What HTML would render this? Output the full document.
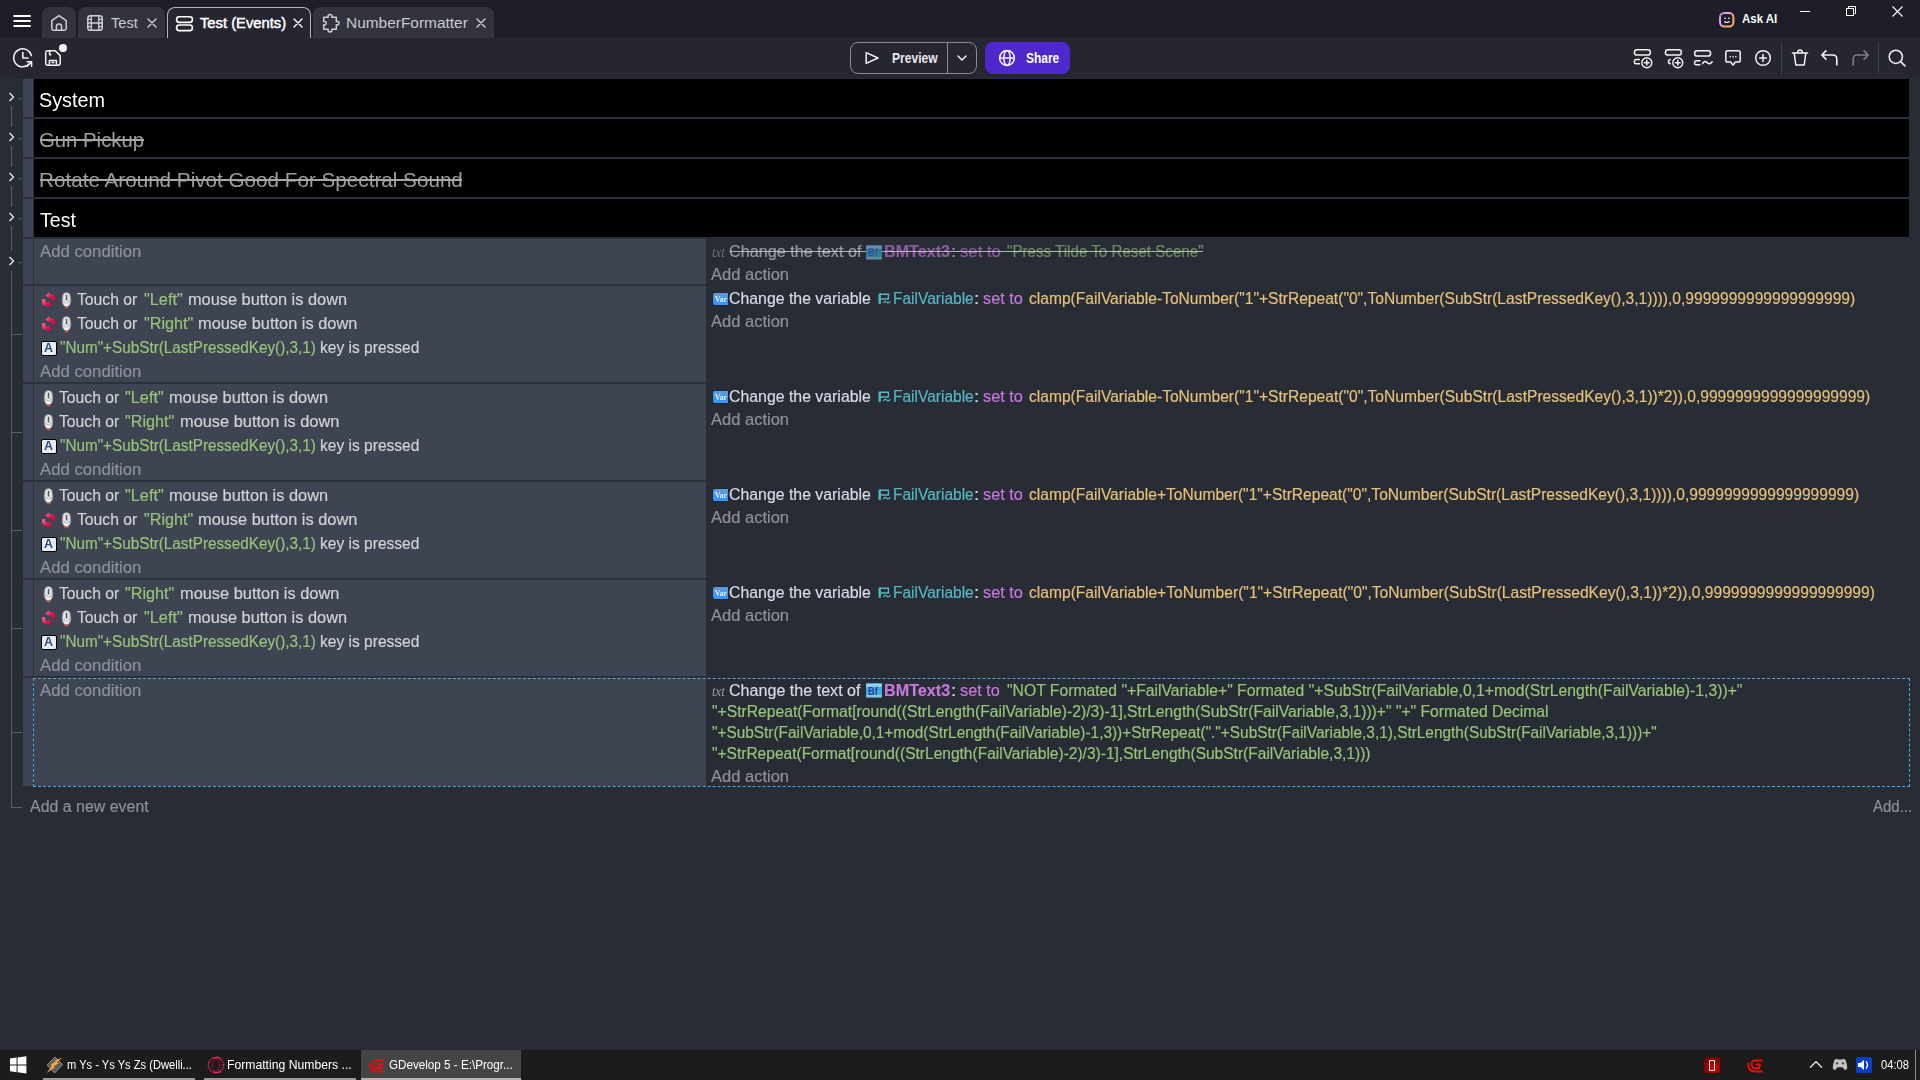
<!DOCTYPE html>
<html><head><meta charset="utf-8"><title>GDevelop 5</title>
<style>
html,body{margin:0;padding:0;width:1920px;height:1080px;overflow:hidden;background:#282c34;}
body{position:relative;font-family:"Liberation Sans",sans-serif;}
body>div,body>svg,.t,.gl>div{position:absolute;}
.gl{left:0;top:0;width:1920px;height:1080px;will-change:transform;}
.t{white-space:pre;transform-origin:0 0;display:inline-block;}
svg{overflow:visible;}
</style></head><body>
<div style="left:0px;top:0px;width:1920px;height:38px;background:#1d1e27;"></div>
<div style="left:0px;top:38px;width:1920px;height:40px;background:#25262f;"></div>
<div style="left:42px;top:7px;width:34px;height:31px;background:#32333d;border-radius:8px 8px 0 0;"></div>
<div style="left:78px;top:7px;width:87px;height:31px;background:#32333d;border-radius:8px 8px 0 0;"></div>
<div style="left:167px;top:7px;width:142px;height:30px;background:#25262f;border:1px solid #b4b5bd;border-bottom:none;border-radius:8px 8px 0 0;"></div>
<div style="left:313px;top:7px;width:181px;height:31px;background:#32333d;border-radius:8px 8px 0 0;"></div>
<div style="left:850px;top:42px;width:125px;height:30px;border:1px solid #8a8b95;border-radius:8px;"></div>
<div style="left:947px;top:43px;width:1px;height:30px;background:#8a8b95;"></div>
<div style="left:985px;top:42px;width:85px;height:32px;background:#4c28cd;border-radius:8px;"></div>
<div style="left:1781px;top:42px;width:1px;height:32px;background:#3b4152;"></div>
<div style="left:1878px;top:42px;width:1px;height:32px;background:#3b4152;"></div>
<div style="left:23px;top:79px;width:1886px;height:159px;background:#2c313b;"></div>
<div style="left:23px;top:79px;width:10px;height:38px;background:#3e4452;"></div>
<div style="left:34px;top:79px;width:1875px;height:38px;background:#000000;"></div>
<div style="left:23px;top:119px;width:10px;height:38px;background:#3e4452;"></div>
<div style="left:34px;top:119px;width:1875px;height:38px;background:#000000;"></div>
<div style="left:23px;top:159px;width:10px;height:38px;background:#3e4452;"></div>
<div style="left:34px;top:159px;width:1875px;height:38px;background:#000000;"></div>
<div style="left:23px;top:199px;width:10px;height:38px;background:#3e4452;"></div>
<div style="left:34px;top:199px;width:1875px;height:38px;background:#000000;"></div>
<div style="left:23px;top:237px;width:683px;height:549px;background:#2c313b;"></div>
<div style="left:23px;top:239px;width:10px;height:45px;background:#3e4452;"></div>
<div style="left:34px;top:239px;width:672px;height:45px;background:#3e4452;"></div>
<div style="left:706px;top:239px;width:1203px;height:45px;background:#282c34;"></div>
<div style="left:23px;top:286px;width:10px;height:96px;background:#3e4452;"></div>
<div style="left:34px;top:286px;width:672px;height:96px;background:#3e4452;"></div>
<div style="left:706px;top:286px;width:1203px;height:96px;background:#282c34;"></div>
<div style="left:23px;top:384px;width:10px;height:96px;background:#3e4452;"></div>
<div style="left:34px;top:384px;width:672px;height:96px;background:#3e4452;"></div>
<div style="left:706px;top:384px;width:1203px;height:96px;background:#282c34;"></div>
<div style="left:23px;top:482px;width:10px;height:96px;background:#3e4452;"></div>
<div style="left:34px;top:482px;width:672px;height:96px;background:#3e4452;"></div>
<div style="left:706px;top:482px;width:1203px;height:96px;background:#282c34;"></div>
<div style="left:23px;top:580px;width:10px;height:96px;background:#3e4452;"></div>
<div style="left:34px;top:580px;width:672px;height:96px;background:#3e4452;"></div>
<div style="left:706px;top:580px;width:1203px;height:96px;background:#282c34;"></div>
<div style="left:23px;top:678px;width:10px;height:108px;background:#3e4452;"></div>
<div style="left:34px;top:678px;width:672px;height:108px;background:#3e4452;"></div>
<div style="left:706px;top:678px;width:1203px;height:108px;background:#282c34;"></div>
<div style="left:33px;top:678px;width:1875px;height:107px;border:1px dashed #3daee9;"></div>
<svg style="left:8px;top:92px" width="8" height="10"><path d="M1.5 1 L5.5 5 L1.5 9" fill="none" stroke="#e6e6e6" stroke-width="1.4"/></svg>
<div style="left:19px;top:98px;width:3px;height:1px;background:#5b5f6a;"></div>
<svg style="left:8px;top:132px" width="8" height="10"><path d="M1.5 1 L5.5 5 L1.5 9" fill="none" stroke="#e6e6e6" stroke-width="1.4"/></svg>
<div style="left:19px;top:138px;width:3px;height:1px;background:#5b5f6a;"></div>
<svg style="left:8px;top:172px" width="8" height="10"><path d="M1.5 1 L5.5 5 L1.5 9" fill="none" stroke="#e6e6e6" stroke-width="1.4"/></svg>
<div style="left:19px;top:178px;width:3px;height:1px;background:#5b5f6a;"></div>
<svg style="left:8px;top:212px" width="8" height="10"><path d="M1.5 1 L5.5 5 L1.5 9" fill="none" stroke="#e6e6e6" stroke-width="1.4"/></svg>
<div style="left:19px;top:218px;width:3px;height:1px;background:#5b5f6a;"></div>
<svg style="left:8px;top:256px" width="8" height="10"><path d="M1.5 1 L5.5 5 L1.5 9" fill="none" stroke="#e6e6e6" stroke-width="1.4"/></svg>
<div style="left:19px;top:262px;width:3px;height:1px;background:#5b5f6a;"></div>
<div style="left:11px;top:106px;width:1px;height:21px;background:#5b5f6a;"></div>
<div style="left:11px;top:146px;width:1px;height:21px;background:#5b5f6a;"></div>
<div style="left:11px;top:186px;width:1px;height:21px;background:#5b5f6a;"></div>
<div style="left:11px;top:226px;width:1px;height:25px;background:#5b5f6a;"></div>
<div style="left:11px;top:271px;width:1px;height:537px;background:#5b5f6a;"></div>
<div style="left:11px;top:334px;width:11px;height:1px;background:#5b5f6a;"></div>
<div style="left:11px;top:432px;width:11px;height:1px;background:#5b5f6a;"></div>
<div style="left:11px;top:530px;width:11px;height:1px;background:#5b5f6a;"></div>
<div style="left:11px;top:628px;width:11px;height:1px;background:#5b5f6a;"></div>
<div style="left:11px;top:732px;width:11px;height:1px;background:#5b5f6a;"></div>
<div style="left:11px;top:807px;width:11px;height:1px;background:#5b5f6a;"></div>
<div style="left:0px;top:1050px;width:1920px;height:30px;background:#1c1c1c;"></div>
<div style="left:361px;top:1050px;width:160px;height:30px;background:#454545;"></div>
<div style="left:43px;top:1078px;width:152px;height:2px;background:#9b9b9b;"></div>
<div style="left:204px;top:1078px;width:152px;height:2px;background:#9b9b9b;"></div>
<div style="left:361px;top:1078px;width:160px;height:2px;background:#b5b5b5;"></div>
<div style="left:1915px;top:1050px;width:1px;height:30px;background:#8a8a8a;"></div>
<svg style="left:13px;top:14px;" width="19" height="14" viewBox="0 0 19 14"><path d="M1.2 2 H17 M1.2 7 H17 M1.2 12 H17" stroke="#ffffff" stroke-width="1.8" stroke-linecap="round"/></svg>
<svg style="left:50px;top:14px;" width="18" height="18" viewBox="0 0 18 18"><path d="M9 1.6 L1.8 6.6 V14.6 Q1.8 16.3 3.5 16.3 H14.5 Q16.2 16.3 16.2 14.6 V6.6 Z" fill="none" stroke="#cfcfd6" stroke-width="1.5" stroke-linejoin="round"/><path d="M6.4 16.3 V12.6 A2.6 2.6 0 0 1 11.6 12.6 V16.3" fill="none" stroke="#cfcfd6" stroke-width="1.5"/></svg>
<svg style="left:86px;top:14px;" width="18" height="18" viewBox="0 0 18 18"><rect x="1.8" y="1.7" width="14.4" height="14.6" rx="2.6" fill="none" stroke="#cfcfd6" stroke-width="1.5"/><path d="M5.3 1.7 V16.3 M12.7 1.7 V16.3 M5.3 9 H12.7 M1.8 5.4 H5.3 M1.8 9 H5.3 M1.8 12.6 H5.3 M12.7 5.4 H16.2 M12.7 9 H16.2 M12.7 12.6 H16.2" stroke="#cfcfd6" stroke-width="1.3" fill="none"/></svg>
<svg style="left:175px;top:15px;" width="19" height="17" viewBox="0 0 19 17"><rect x="1.6" y="1.8" width="15.8" height="5.6" rx="2.6" fill="none" stroke="#ffffff" stroke-width="1.6"/><rect x="1.6" y="10" width="15.8" height="5.6" rx="2.6" fill="none" stroke="#ffffff" stroke-width="1.6"/></svg>
<svg style="left:322px;top:13px;" width="18" height="20" viewBox="0 0 18 20"><path d="M1.7 4.2 H6.2 Q5.6 1.5 8 1.5 Q10.4 1.5 9.8 4.2 H14.3 V8.6 Q17 8 17 10.2 Q17 12.4 14.3 11.8 V16.2 H9.8 Q10.4 18.9 8 18.9 Q5.6 18.9 6.2 16.2 H1.7 V11.8 Q4.2 12.4 4.2 10.2 Q4.2 8 1.7 8.6 Z" fill="none" stroke="#cfcfd6" stroke-width="1.5" stroke-linejoin="round"/></svg>
<svg style="left:146.5px;top:18px;" width="10" height="10" viewBox="0 0 10 10"><path d="M1 1 L9 9 M9 1 L1 9" stroke="#cfcfd6" stroke-width="1.4" stroke-linecap="round"/></svg>
<svg style="left:292.5px;top:18px;" width="10" height="10" viewBox="0 0 10 10"><path d="M1 1 L9 9 M9 1 L1 9" stroke="#ffffff" stroke-width="1.4" stroke-linecap="round"/></svg>
<svg style="left:475.5px;top:18px;" width="10" height="10" viewBox="0 0 10 10"><path d="M1 1 L9 9 M9 1 L1 9" stroke="#cfcfd6" stroke-width="1.4" stroke-linecap="round"/></svg>
<svg style="left:12px;top:47px;" width="22" height="22" viewBox="0 0 22 22"><path d="M19.4 8.6 A9 9 0 1 0 17.6 16.6" fill="none" stroke="#f2f2f4" stroke-width="1.5" stroke-linecap="round"/><path d="M15.2 14.8 H19.6 V19.2 M19.4 15 L15.4 19" fill="none" stroke="#f2f2f4" stroke-width="1.5" stroke-linecap="round" stroke-linejoin="round"/><path d="M10.8 5.6 V11 H16" fill="none" stroke="#f2f2f4" stroke-width="1.6" stroke-linecap="round" stroke-linejoin="round"/></svg>
<svg style="left:44px;top:49px;" width="18" height="18" viewBox="0 0 18 18"><path d="M3.6 1.8 H11.2 L16.2 6.6 V14 Q16.2 16.2 14 16.2 H3.6 Q1.7 16.2 1.7 14 V4 Q1.7 1.8 3.6 1.8 Z" fill="none" stroke="#f2f2f4" stroke-width="1.5" stroke-linejoin="round"/><path d="M5.6 1.8 V5.8 H7.4 M5.4 16.2 V11.4 H12.4 V16.2 M7.4 13.6 H10.4" fill="none" stroke="#f2f2f4" stroke-width="1.5" stroke-linejoin="round"/></svg>
<div style="left:58.8px;top:43.6px;width:8.4px;height:8.4px;border-radius:50%;background:#fafafa;"></div>
<svg style="left:864px;top:50px;" width="16" height="16" viewBox="0 0 16 16"><path d="M2.2 2.6 L14 8 L2.2 13.4 Z" fill="none" stroke="#f2f2f4" stroke-width="1.5" stroke-linejoin="round"/></svg>
<svg style="left:956px;top:54px;" width="12" height="8" viewBox="0 0 12 8"><path d="M2 2 L6 6 L10 2" fill="none" stroke="#f2f2f4" stroke-width="1.5" stroke-linecap="round" stroke-linejoin="round"/></svg>
<svg style="left:998px;top:49px;" width="18" height="18" viewBox="0 0 18 18"><circle cx="9" cy="9" r="7.4" fill="none" stroke="#ffffff" stroke-width="1.5"/><ellipse cx="9" cy="9" rx="3.2" ry="7.4" fill="none" stroke="#ffffff" stroke-width="1.4"/><path d="M1.6 9 H16.4" stroke="#ffffff" stroke-width="1.4"/></svg>
<svg style="left:1718px;top:11px;" width="18" height="18" viewBox="0 0 18 18"><defs><linearGradient id="aig" x1="0" y1="0.1" x2="1" y2="0.9"><stop offset="0" stop-color="#b98bd6"/><stop offset="0.35" stop-color="#f0a8e8"/><stop offset="0.7" stop-color="#ffa070"/><stop offset="1" stop-color="#ffbb48"/></linearGradient></defs><rect x="2" y="2" width="13.4" height="13.4" rx="4.2" fill="#1d1e27" stroke="url(#aig)" stroke-width="2"/><path d="M6.4 7.4 H7.8 M10 7.4 H11.4" stroke="#ffffff" stroke-width="1.2"/><path d="M6.2 10.6 Q8.8 12.4 11.6 10.6" fill="none" stroke="#ffffff" stroke-width="1.2"/></svg>
<div style="left:1800px;top:11px;width:10px;height:1px;background:#ffffff;"></div>
<svg style="left:1845px;top:5px;" width="12" height="11" viewBox="0 0 12 11"><rect x="1.5" y="3.5" width="7" height="7" fill="none" stroke="#ffffff" stroke-width="1"/><path d="M3.5 3.5 V1.5 H10.5 V8.5 H8.5" fill="none" stroke="#ffffff" stroke-width="1"/></svg>
<svg style="left:1892px;top:6px;" width="11" height="11" viewBox="0 0 11 11"><path d="M0.5 0.5 L10.5 10.5 M10.5 0.5 L0.5 10.5" stroke="#ffffff" stroke-width="1.1"/></svg>
<svg style="left:1632px;top:47px;" width="24" height="24" viewBox="0 0 24 24"><rect x="2.4" y="2.8" width="16" height="5.2" rx="2.6" fill="none" stroke="#f2f2f4" stroke-width="1.5"/><path d="M8 12.4 H4.2 Q2.4 12.4 2.4 14 V15.2 Q2.4 16.8 4.2 16.8 H8" fill="none" stroke="#f2f2f4" stroke-width="1.5"/><circle cx="14.8" cy="15.7" r="5" fill="#25262f" stroke="#f2f2f4" stroke-width="1.4"/><path d="M12.4 15.7 H17.2 M14.8 13.299999999999999 V18.099999999999998" stroke="#f2f2f4" stroke-width="1.4" stroke-linecap="round"/></svg>
<svg style="left:1663px;top:47px;" width="24" height="24" viewBox="0 0 24 24"><rect x="2.4" y="2.8" width="16" height="5.2" rx="2.6" fill="none" stroke="#f2f2f4" stroke-width="1.5"/><path d="M7.8 12.4 Q5.4 12.4 5.4 14.6 Q5.4 16.8 7.8 16.8" fill="none" stroke="#f2f2f4" stroke-width="1.5"/><circle cx="14.8" cy="15.7" r="5" fill="#25262f" stroke="#f2f2f4" stroke-width="1.4"/><path d="M12.4 15.7 H17.2 M14.8 13.299999999999999 V18.099999999999998" stroke="#f2f2f4" stroke-width="1.4" stroke-linecap="round"/></svg>
<svg style="left:1692px;top:48px;" width="24" height="22" viewBox="0 0 24 22"><rect x="2.6" y="2.8" width="16" height="5.2" rx="2.6" fill="none" stroke="#f2f2f4" stroke-width="1.5"/><path d="M8.4 12.8 H4.4 Q2.6 12.8 2.6 14.4 V15.2 Q2.6 16.8 4.4 16.8 H8.4" fill="none" stroke="#f2f2f4" stroke-width="1.5"/><path d="M10.6 15.6 Q12.6 12 15.2 14.6 Q17.8 17.2 20.2 13.8" fill="none" stroke="#f2f2f4" stroke-width="1.5" stroke-linecap="round"/></svg>
<svg style="left:1724px;top:49px;" width="18" height="18" viewBox="0 0 18 18"><path d="M3.6 1.8 H14.4 Q16.2 1.8 16.2 3.6 V11.2 Q16.2 13 14.4 13 H11.4 L9 16 L6.6 13 H3.6 Q1.8 13 1.8 11.2 V3.6 Q1.8 1.8 3.6 1.8 Z" fill="none" stroke="#f2f2f4" stroke-width="1.5" stroke-linejoin="round"/><path d="M5.6 7.8 H6.8 M8.4 7.8 H9.6 M11.2 7.8 H12.4" stroke="#f2f2f4" stroke-width="1.4"/></svg>
<svg style="left:1754px;top:49px;" width="18" height="18" viewBox="0 0 18 18"><circle cx="9" cy="9" r="7.3" fill="none" stroke="#f2f2f4" stroke-width="1.5"/><path d="M5.6 9 H12.4 M9 5.6 V12.4" stroke="#f2f2f4" stroke-width="1.5" stroke-linecap="round"/></svg>
<svg style="left:1791px;top:48px;" width="18" height="19" viewBox="0 0 18 19"><path d="M1.4 5 H16.6 M3.2 5 L4.8 17 H13.2 L14.8 5 M6.6 4.8 Q6.6 2 9 2 Q11.4 2 11.4 4.8" fill="none" stroke="#f2f2f4" stroke-width="1.5" stroke-linecap="round" stroke-linejoin="round"/></svg>
<svg style="left:1820px;top:48px;" width="20" height="19" viewBox="0 0 20 19"><path d="M6.4 2.4 L1.8 7 L6.4 11.6 M2 7 H12.6 Q16.8 7 16.8 11 V17.6" fill="none" stroke="#f2f2f4" stroke-width="1.6" stroke-linejoin="round"/></svg>
<svg style="left:1850px;top:48px;" width="20" height="19" viewBox="0 0 20 19"><path d="M13.6 2.4 L18.2 7 L13.6 11.6 M18 7 H7.4 Q3.2 7 3.2 11 V17.6" fill="none" stroke="#7d7d85" stroke-width="1.6" stroke-linejoin="round"/></svg>
<svg style="left:1887px;top:48px;" width="20" height="20" viewBox="0 0 20 20"><circle cx="8.8" cy="8.8" r="6.6" fill="none" stroke="#f2f2f4" stroke-width="1.5"/><path d="M13.6 13.6 L18 17.8" stroke="#f2f2f4" stroke-width="1.6" stroke-linecap="round"/></svg>
<svg style="left:41.8px;top:292.0px;" width="14" height="16" viewBox="0 0 14 16"><defs><linearGradient id="ig" x1="0" y1="0" x2="1" y2="1"><stop offset="0" stop-color="#f27aa2"/><stop offset="0.55" stop-color="#e3124a"/><stop offset="1" stop-color="#d4003a"/></linearGradient></defs><path d="M3.2 3.5 L7.2 0.2 L7.3 2 C11.5 1.6 13.6 4 13.5 6.8 L12.9 9 L10.3 9 C10.6 6.5 9.6 5.2 7.4 5.2 L7.5 6.8 Z" fill="url(#ig)"/><path d="M10.3 12.5 L6.3 15.8 L6.2 14 C2 14.4 -0.1 12 0 9.2 L0.6 7 L3.2 7 C2.9 9.5 3.9 10.8 6.1 10.8 L6 9.2 Z" fill="url(#ig)"/></svg>
<svg style="left:61.4px;top:291.7px;" width="11" height="17" viewBox="0 0 11 17"><defs><linearGradient id="mg" x1="0" y1="0" x2="1" y2="0"><stop offset="0" stop-color="#c9c9c9"/><stop offset="0.5" stop-color="#ffffff"/><stop offset="1" stop-color="#bdbdbd"/></linearGradient></defs><ellipse cx="5.5" cy="14.6" rx="2.4" ry="1.9" fill="#e2473a"/><path d="M1.4 4.4 Q1.6 0.6 5.5 0.6 Q9.4 0.6 9.6 4.4 L10 8 Q10 14.6 5.5 14.6 Q1 14.6 1 8 Z" fill="url(#mg)" stroke="#6c6f78" stroke-width="0.6"/><path d="M5.5 2.6 V8.6" stroke="#55585f" stroke-width="1.6"/><path d="M2.8 9 Q5.5 13 8.2 9" fill="none" stroke="#9aa0a8" stroke-width="0.9"/></svg>
<svg style="left:41.8px;top:316.0px;" width="14" height="16" viewBox="0 0 14 16"><defs><linearGradient id="ig" x1="0" y1="0" x2="1" y2="1"><stop offset="0" stop-color="#f27aa2"/><stop offset="0.55" stop-color="#e3124a"/><stop offset="1" stop-color="#d4003a"/></linearGradient></defs><path d="M3.2 3.5 L7.2 0.2 L7.3 2 C11.5 1.6 13.6 4 13.5 6.8 L12.9 9 L10.3 9 C10.6 6.5 9.6 5.2 7.4 5.2 L7.5 6.8 Z" fill="url(#ig)"/><path d="M10.3 12.5 L6.3 15.8 L6.2 14 C2 14.4 -0.1 12 0 9.2 L0.6 7 L3.2 7 C2.9 9.5 3.9 10.8 6.1 10.8 L6 9.2 Z" fill="url(#ig)"/></svg>
<svg style="left:61.4px;top:315.7px;" width="11" height="17" viewBox="0 0 11 17"><defs><linearGradient id="mg" x1="0" y1="0" x2="1" y2="0"><stop offset="0" stop-color="#c9c9c9"/><stop offset="0.5" stop-color="#ffffff"/><stop offset="1" stop-color="#bdbdbd"/></linearGradient></defs><ellipse cx="5.5" cy="14.6" rx="2.4" ry="1.9" fill="#e2473a"/><path d="M1.4 4.4 Q1.6 0.6 5.5 0.6 Q9.4 0.6 9.6 4.4 L10 8 Q10 14.6 5.5 14.6 Q1 14.6 1 8 Z" fill="url(#mg)" stroke="#6c6f78" stroke-width="0.6"/><path d="M5.5 2.6 V8.6" stroke="#55585f" stroke-width="1.6"/><path d="M2.8 9 Q5.5 13 8.2 9" fill="none" stroke="#9aa0a8" stroke-width="0.9"/></svg>
<div style="left:41px;top:340.5px;width:14px;height:13px;background:#e8eaee;border:1px solid #000;border-radius:2px;"></div>
<div style="left:712.5px;top:293.0px;width:15.5px;height:12px;border-radius:2px 0 0 2px;background:linear-gradient(#5b9ce2 0,#5496de 49%,#3794ff 51%,#3a97ff 100%);box-shadow:0 0 0 .5px #1e1f22;"></div>
<svg style="left:877.5px;top:292.6px;" width="13" height="12" viewBox="0 0 13 12"><path d="M1.7 0.6 V10.8" stroke="#56b6c2" stroke-width="2.4"/><path d="M2 1.2 H10.4 V6 H2.6" fill="none" stroke="#56b6c2" stroke-width="1.4"/><path d="M5.6 9.6 Q7.2 7.2 8.8 9.2 Q10.4 11 12 8.6" fill="none" stroke="#56b6c2" stroke-width="1.3" stroke-linecap="round"/></svg>
<svg style="left:43.1px;top:389.7px;" width="11" height="17" viewBox="0 0 11 17"><defs><linearGradient id="mg" x1="0" y1="0" x2="1" y2="0"><stop offset="0" stop-color="#c9c9c9"/><stop offset="0.5" stop-color="#ffffff"/><stop offset="1" stop-color="#bdbdbd"/></linearGradient></defs><ellipse cx="5.5" cy="14.6" rx="2.4" ry="1.9" fill="#e2473a"/><path d="M1.4 4.4 Q1.6 0.6 5.5 0.6 Q9.4 0.6 9.6 4.4 L10 8 Q10 14.6 5.5 14.6 Q1 14.6 1 8 Z" fill="url(#mg)" stroke="#6c6f78" stroke-width="0.6"/><path d="M5.5 2.6 V8.6" stroke="#55585f" stroke-width="1.6"/><path d="M2.8 9 Q5.5 13 8.2 9" fill="none" stroke="#9aa0a8" stroke-width="0.9"/></svg>
<svg style="left:43.1px;top:413.7px;" width="11" height="17" viewBox="0 0 11 17"><defs><linearGradient id="mg" x1="0" y1="0" x2="1" y2="0"><stop offset="0" stop-color="#c9c9c9"/><stop offset="0.5" stop-color="#ffffff"/><stop offset="1" stop-color="#bdbdbd"/></linearGradient></defs><ellipse cx="5.5" cy="14.6" rx="2.4" ry="1.9" fill="#e2473a"/><path d="M1.4 4.4 Q1.6 0.6 5.5 0.6 Q9.4 0.6 9.6 4.4 L10 8 Q10 14.6 5.5 14.6 Q1 14.6 1 8 Z" fill="url(#mg)" stroke="#6c6f78" stroke-width="0.6"/><path d="M5.5 2.6 V8.6" stroke="#55585f" stroke-width="1.6"/><path d="M2.8 9 Q5.5 13 8.2 9" fill="none" stroke="#9aa0a8" stroke-width="0.9"/></svg>
<div style="left:41px;top:438.5px;width:14px;height:13px;background:#e8eaee;border:1px solid #000;border-radius:2px;"></div>
<div style="left:712.5px;top:391.0px;width:15.5px;height:12px;border-radius:2px 0 0 2px;background:linear-gradient(#5b9ce2 0,#5496de 49%,#3794ff 51%,#3a97ff 100%);box-shadow:0 0 0 .5px #1e1f22;"></div>
<svg style="left:877.5px;top:390.6px;" width="13" height="12" viewBox="0 0 13 12"><path d="M1.7 0.6 V10.8" stroke="#56b6c2" stroke-width="2.4"/><path d="M2 1.2 H10.4 V6 H2.6" fill="none" stroke="#56b6c2" stroke-width="1.4"/><path d="M5.6 9.6 Q7.2 7.2 8.8 9.2 Q10.4 11 12 8.6" fill="none" stroke="#56b6c2" stroke-width="1.3" stroke-linecap="round"/></svg>
<svg style="left:43.1px;top:487.7px;" width="11" height="17" viewBox="0 0 11 17"><defs><linearGradient id="mg" x1="0" y1="0" x2="1" y2="0"><stop offset="0" stop-color="#c9c9c9"/><stop offset="0.5" stop-color="#ffffff"/><stop offset="1" stop-color="#bdbdbd"/></linearGradient></defs><ellipse cx="5.5" cy="14.6" rx="2.4" ry="1.9" fill="#e2473a"/><path d="M1.4 4.4 Q1.6 0.6 5.5 0.6 Q9.4 0.6 9.6 4.4 L10 8 Q10 14.6 5.5 14.6 Q1 14.6 1 8 Z" fill="url(#mg)" stroke="#6c6f78" stroke-width="0.6"/><path d="M5.5 2.6 V8.6" stroke="#55585f" stroke-width="1.6"/><path d="M2.8 9 Q5.5 13 8.2 9" fill="none" stroke="#9aa0a8" stroke-width="0.9"/></svg>
<svg style="left:41.8px;top:512.0px;" width="14" height="16" viewBox="0 0 14 16"><defs><linearGradient id="ig" x1="0" y1="0" x2="1" y2="1"><stop offset="0" stop-color="#f27aa2"/><stop offset="0.55" stop-color="#e3124a"/><stop offset="1" stop-color="#d4003a"/></linearGradient></defs><path d="M3.2 3.5 L7.2 0.2 L7.3 2 C11.5 1.6 13.6 4 13.5 6.8 L12.9 9 L10.3 9 C10.6 6.5 9.6 5.2 7.4 5.2 L7.5 6.8 Z" fill="url(#ig)"/><path d="M10.3 12.5 L6.3 15.8 L6.2 14 C2 14.4 -0.1 12 0 9.2 L0.6 7 L3.2 7 C2.9 9.5 3.9 10.8 6.1 10.8 L6 9.2 Z" fill="url(#ig)"/></svg>
<svg style="left:61.4px;top:511.7px;" width="11" height="17" viewBox="0 0 11 17"><defs><linearGradient id="mg" x1="0" y1="0" x2="1" y2="0"><stop offset="0" stop-color="#c9c9c9"/><stop offset="0.5" stop-color="#ffffff"/><stop offset="1" stop-color="#bdbdbd"/></linearGradient></defs><ellipse cx="5.5" cy="14.6" rx="2.4" ry="1.9" fill="#e2473a"/><path d="M1.4 4.4 Q1.6 0.6 5.5 0.6 Q9.4 0.6 9.6 4.4 L10 8 Q10 14.6 5.5 14.6 Q1 14.6 1 8 Z" fill="url(#mg)" stroke="#6c6f78" stroke-width="0.6"/><path d="M5.5 2.6 V8.6" stroke="#55585f" stroke-width="1.6"/><path d="M2.8 9 Q5.5 13 8.2 9" fill="none" stroke="#9aa0a8" stroke-width="0.9"/></svg>
<div style="left:41px;top:536.5px;width:14px;height:13px;background:#e8eaee;border:1px solid #000;border-radius:2px;"></div>
<div style="left:712.5px;top:489.0px;width:15.5px;height:12px;border-radius:2px 0 0 2px;background:linear-gradient(#5b9ce2 0,#5496de 49%,#3794ff 51%,#3a97ff 100%);box-shadow:0 0 0 .5px #1e1f22;"></div>
<svg style="left:877.5px;top:488.6px;" width="13" height="12" viewBox="0 0 13 12"><path d="M1.7 0.6 V10.8" stroke="#56b6c2" stroke-width="2.4"/><path d="M2 1.2 H10.4 V6 H2.6" fill="none" stroke="#56b6c2" stroke-width="1.4"/><path d="M5.6 9.6 Q7.2 7.2 8.8 9.2 Q10.4 11 12 8.6" fill="none" stroke="#56b6c2" stroke-width="1.3" stroke-linecap="round"/></svg>
<svg style="left:43.1px;top:585.7px;" width="11" height="17" viewBox="0 0 11 17"><defs><linearGradient id="mg" x1="0" y1="0" x2="1" y2="0"><stop offset="0" stop-color="#c9c9c9"/><stop offset="0.5" stop-color="#ffffff"/><stop offset="1" stop-color="#bdbdbd"/></linearGradient></defs><ellipse cx="5.5" cy="14.6" rx="2.4" ry="1.9" fill="#e2473a"/><path d="M1.4 4.4 Q1.6 0.6 5.5 0.6 Q9.4 0.6 9.6 4.4 L10 8 Q10 14.6 5.5 14.6 Q1 14.6 1 8 Z" fill="url(#mg)" stroke="#6c6f78" stroke-width="0.6"/><path d="M5.5 2.6 V8.6" stroke="#55585f" stroke-width="1.6"/><path d="M2.8 9 Q5.5 13 8.2 9" fill="none" stroke="#9aa0a8" stroke-width="0.9"/></svg>
<svg style="left:41.8px;top:610.0px;" width="14" height="16" viewBox="0 0 14 16"><defs><linearGradient id="ig" x1="0" y1="0" x2="1" y2="1"><stop offset="0" stop-color="#f27aa2"/><stop offset="0.55" stop-color="#e3124a"/><stop offset="1" stop-color="#d4003a"/></linearGradient></defs><path d="M3.2 3.5 L7.2 0.2 L7.3 2 C11.5 1.6 13.6 4 13.5 6.8 L12.9 9 L10.3 9 C10.6 6.5 9.6 5.2 7.4 5.2 L7.5 6.8 Z" fill="url(#ig)"/><path d="M10.3 12.5 L6.3 15.8 L6.2 14 C2 14.4 -0.1 12 0 9.2 L0.6 7 L3.2 7 C2.9 9.5 3.9 10.8 6.1 10.8 L6 9.2 Z" fill="url(#ig)"/></svg>
<svg style="left:61.4px;top:609.7px;" width="11" height="17" viewBox="0 0 11 17"><defs><linearGradient id="mg" x1="0" y1="0" x2="1" y2="0"><stop offset="0" stop-color="#c9c9c9"/><stop offset="0.5" stop-color="#ffffff"/><stop offset="1" stop-color="#bdbdbd"/></linearGradient></defs><ellipse cx="5.5" cy="14.6" rx="2.4" ry="1.9" fill="#e2473a"/><path d="M1.4 4.4 Q1.6 0.6 5.5 0.6 Q9.4 0.6 9.6 4.4 L10 8 Q10 14.6 5.5 14.6 Q1 14.6 1 8 Z" fill="url(#mg)" stroke="#6c6f78" stroke-width="0.6"/><path d="M5.5 2.6 V8.6" stroke="#55585f" stroke-width="1.6"/><path d="M2.8 9 Q5.5 13 8.2 9" fill="none" stroke="#9aa0a8" stroke-width="0.9"/></svg>
<div style="left:41px;top:634.5px;width:14px;height:13px;background:#e8eaee;border:1px solid #000;border-radius:2px;"></div>
<div style="left:712.5px;top:587.0px;width:15.5px;height:12px;border-radius:2px 0 0 2px;background:linear-gradient(#5b9ce2 0,#5496de 49%,#3794ff 51%,#3a97ff 100%);box-shadow:0 0 0 .5px #1e1f22;"></div>
<svg style="left:877.5px;top:586.6px;" width="13" height="12" viewBox="0 0 13 12"><path d="M1.7 0.6 V10.8" stroke="#56b6c2" stroke-width="2.4"/><path d="M2 1.2 H10.4 V6 H2.6" fill="none" stroke="#56b6c2" stroke-width="1.4"/><path d="M5.6 9.6 Q7.2 7.2 8.8 9.2 Q10.4 11 12 8.6" fill="none" stroke="#56b6c2" stroke-width="1.3" stroke-linecap="round"/></svg>
<div style="left:866px;top:683px;width:15.5px;height:15px;opacity:1;border-radius:1px;background:linear-gradient(#2f86ad 0,#93d2ee 9%,#8fd0ec 22%,#38aee2 30%,#3bb0e2 76%,#8cc6df 82%,#86c0da 92%,#236d8e 100%);"></div>
<div style="left:866px;top:244.6px;width:15.5px;height:15px;opacity:0.6;border-radius:1px;background:linear-gradient(#2f86ad 0,#93d2ee 9%,#8fd0ec 22%,#38aee2 30%,#3bb0e2 76%,#8cc6df 82%,#86c0da 92%,#236d8e 100%);"></div>
<svg style="left:10px;top:1056px;" width="17" height="18" viewBox="0 0 17 18"><path d="M0 2.6 L6.6 1.6 V8.4 H0 Z M7.6 1.5 L16.4 0.2 V8.4 H7.6 Z M0 9.4 H6.6 V16.2 L0 15.2 Z M7.6 9.4 H16.4 V17.6 L7.6 16.3 Z" fill="#ffffff"/></svg>
<svg style="left:46px;top:1056px;" width="18" height="18" viewBox="0 0 18 18"><path d="M9 1 L16.6 8.6 L8.6 17 L1 9 Z" fill="#5a5a5a" stroke="#c8c8c8" stroke-width="0.6"/><path d="M16.6 1.6 L11 6 L13 7 L7.6 10.4 L9 11.4 L0.6 17 L6 9.8 L4.2 9 L9.6 5.2 L8.4 4.4 Z" fill="#f7a52e"/></svg>
<svg style="left:207px;top:1056px;" width="18" height="18" viewBox="0 0 18 18"><circle cx="9" cy="9" r="7.6" fill="none" stroke="#f61e52" stroke-width="1.5" stroke-dasharray="1.2 0.9"/><path d="M6.4 2 Q11.4 0.6 13.6 2.6 M6.4 16 Q11.4 17.4 13.6 15.4" stroke="#f61e52" stroke-width="1.4" fill="none"/><ellipse cx="9" cy="9" rx="3.8" ry="6" fill="none" stroke="#c81848" stroke-width="1.1" stroke-dasharray="1 1.1"/></svg>
<svg style="left:368.5px;top:1059px;" width="17" height="14" viewBox="0 0 17 14"><path d="M15.6 1.4 H8.4 Q4.6 1.4 4.6 5.2 Q4.6 9.2 8.6 9.2 H12 L12.8 5.4 H8.6" fill="none" stroke="#ee0a0a" stroke-width="2" stroke-linejoin="round"/><path d="M1.2 4.6 Q0.6 12.4 8.4 12.4 H14.8" fill="none" stroke="#ee0a0a" stroke-width="2" stroke-linecap="round"/></svg>
<svg style="left:1746.5px;top:1059px;" width="17" height="14" viewBox="0 0 17 14"><path d="M15.6 1.4 H8.4 Q4.6 1.4 4.6 5.2 Q4.6 9.2 8.6 9.2 H12 L12.8 5.4 H8.6" fill="none" stroke="#ee0a0a" stroke-width="2" stroke-linejoin="round"/><path d="M1.2 4.6 Q0.6 12.4 8.4 12.4 H14.8" fill="none" stroke="#ee0a0a" stroke-width="2" stroke-linecap="round"/></svg>
<div style="left:1704px;top:1057px;width:16px;height:16px;border-radius:2px;background:radial-gradient(circle at 60% 70%,#e00000,#5a0000 90%);"></div>
<div style="left:1709px;top:1059.5px;width:4px;height:9px;border:1.2px solid #ffffff;border-radius:1px;"></div>
<svg style="left:1809px;top:1060px;" width="14" height="9" viewBox="0 0 14 9"><path d="M1 7.6 L7 1.6 L13 7.6" fill="none" stroke="#ffffff" stroke-width="1.3"/></svg>
<svg style="left:1832px;top:1058px;" width="16" height="13" viewBox="0 0 16 13"><path d="M3.4 1 Q4.6 0.4 5.6 1.6 H10.4 Q11.4 0.4 12.6 1 Q14.6 3 15.2 9.6 Q15.2 12 13.4 12 Q12.2 12 10.6 9.2 H5.4 Q3.8 12 2.6 12 Q0.8 12 0.8 9.6 Q1.4 3 3.4 1 Z" fill="#c4c4c4"/><circle cx="5" cy="5.2" r="1.2" fill="#555"/><circle cx="11" cy="5.2" r="1.2" fill="#555"/></svg>
<div style="left:1856px;top:1057px;width:16px;height:16px;border-radius:2px;background:#0a3fc4;"></div>
<svg style="left:1856px;top:1057px;" width="16" height="16" viewBox="0 0 16 16"><path d="M2 6 H4.4 L8 3 V13 L4.4 10 H2 Z" fill="#ffffff"/><path d="M10 4.4 Q13 8 10 11.6" fill="none" stroke="#ffffff" stroke-width="1.3"/></svg>
<span class="t" style="left:111.44px;top:13.50px;font-size:14px;line-height:18px;color:#c9c9d2;transform:scaleX(1.0431);">Test</span>
<span class="t" style="left:200.24px;top:13.50px;font-size:14px;line-height:18px;color:#ffffff;transform:scaleX(1.0534);-webkit-text-stroke:0.45px #ffffff;">Test (Events)</span>
<span class="t" style="left:345.90px;top:13.50px;font-size:14px;line-height:18px;color:#c9c9d2;transform:scaleX(1.1030);">NumberFormatter</span>
<span class="t" style="left:1742.08px;top:10.00px;font-size:13px;line-height:17px;color:#ffffff;transform:scaleX(0.8821);font-weight:700;">Ask AI</span>
<span class="t" style="left:891.65px;top:49.00px;font-size:14px;line-height:18px;color:#e8e8ee;transform:scaleX(0.8612);font-weight:700;">Preview</span>
<span class="t" style="left:1026.49px;top:49.00px;font-size:14px;line-height:18px;color:#ffffff;transform:scaleX(0.8523);font-weight:700;">Share</span>
<div class="gl">
<span class="t" style="left:39.36px;top:87.00px;font-size:21px;line-height:25px;color:#ffffff;transform:scaleX(0.9432);">System</span>
<span class="t" style="left:39.33px;top:127.00px;font-size:21px;line-height:25px;color:#9e9e9e;transform:scaleX(0.9677);">Gun Pickup</span>
<span class="t" style="left:38.58px;top:167.00px;font-size:21px;line-height:25px;color:#9e9e9e;transform:scaleX(0.9840);">Rotate Around Pivot Good For Spectral Sound</span>
<span class="t" style="left:39.83px;top:207.00px;font-size:21px;line-height:25px;color:#ffffff;transform:scaleX(0.9316);">Test</span>
<span class="t" style="left:39.70px;top:242.10px;font-size:15.6px;line-height:19.6px;color:#8d919a;transform:scaleX(1.0727);-webkit-text-stroke:0.18px #8d919a;">Add condition</span>
<span class="t" style="left:729.42px;top:242.10px;font-size:15.6px;line-height:19.6px;color:#d6dbe9;transform:scaleX(1.0398);-webkit-text-stroke:0.18px #d6dbe9;opacity:0.62;">Change the text of</span>
<span class="t" style="left:883.97px;top:242.10px;font-size:15.6px;line-height:19.6px;color:#c678dd;transform:scaleX(1.0345);font-weight:700;-webkit-text-stroke:0.18px #c678dd;opacity:0.62;">BMText3</span>
<span class="t" style="left:951.10px;top:242.10px;font-size:15.6px;line-height:19.6px;color:#d6dbe9;transform:scaleX(1.2000);-webkit-text-stroke:0.18px #d6dbe9;opacity:0.62;">:</span>
<span class="t" style="left:959.96px;top:242.10px;font-size:15.6px;line-height:19.6px;color:#c678dd;transform:scaleX(1.0730);-webkit-text-stroke:0.18px #c678dd;opacity:0.62;">set to</span>
<span class="t" style="left:1007.01px;top:242.10px;font-size:15.6px;line-height:19.6px;color:#98c379;transform:scaleX(0.9714);-webkit-text-stroke:0.18px #98c379;opacity:0.62;">"Press Tilde To Reset Scene"</span>
<span class="t" style="left:710.50px;top:265.10px;font-size:15.6px;line-height:19.6px;color:#8d919a;transform:scaleX(1.0584);-webkit-text-stroke:0.18px #8d919a;">Add action</span>
<span class="t" style="left:77.25px;top:289.70px;font-size:15.6px;line-height:19.6px;color:#d2d2d5;transform:scaleX(1.0084);-webkit-text-stroke:0.18px #d2d2d5;">Touch or</span>
<span class="t" style="left:143.68px;top:289.70px;font-size:15.6px;line-height:19.6px;color:#98c379;transform:scaleX(1.0444);-webkit-text-stroke:0.18px #98c379;">"Left"</span>
<span class="t" style="left:187.75px;top:289.70px;font-size:15.6px;line-height:19.6px;color:#d2d2d5;transform:scaleX(1.0484);-webkit-text-stroke:0.18px #d2d2d5;">mouse button is down</span>
<span class="t" style="left:77.25px;top:313.70px;font-size:15.6px;line-height:19.6px;color:#d2d2d5;transform:scaleX(1.0084);-webkit-text-stroke:0.18px #d2d2d5;">Touch or</span>
<span class="t" style="left:143.68px;top:313.70px;font-size:15.6px;line-height:19.6px;color:#98c379;transform:scaleX(1.0387);-webkit-text-stroke:0.18px #98c379;">"Right"</span>
<span class="t" style="left:198.45px;top:313.70px;font-size:15.6px;line-height:19.6px;color:#d2d2d5;transform:scaleX(1.0504);-webkit-text-stroke:0.18px #d2d2d5;">mouse button is down</span>
<span class="t" style="left:60.01px;top:337.70px;font-size:15.6px;line-height:19.6px;color:#98c379;transform:scaleX(0.9798);-webkit-text-stroke:0.18px #98c379;">"Num"+SubStr(LastPressedKey(),3,1)</span>
<span class="t" style="left:319.80px;top:337.70px;font-size:15.6px;line-height:19.6px;color:#d2d2d5;transform:scaleX(0.9974);-webkit-text-stroke:0.18px #d2d2d5;">key is pressed</span>
<span class="t" style="left:39.70px;top:361.70px;font-size:15.6px;line-height:19.6px;color:#8d919a;transform:scaleX(1.0727);-webkit-text-stroke:0.18px #8d919a;">Add condition</span>
<span class="t" style="left:729.24px;top:289.20px;font-size:15.6px;line-height:19.6px;color:#d6dbe9;transform:scaleX(1.0163);-webkit-text-stroke:0.18px #d6dbe9;">Change the variable</span>
<span class="t" style="left:893.26px;top:289.20px;font-size:15.6px;line-height:19.6px;color:#56b6c2;transform:scaleX(0.9943);-webkit-text-stroke:0.18px #56b6c2;">FailVariable</span>
<span class="t" style="left:973.70px;top:289.20px;font-size:15.6px;line-height:19.6px;color:#d6dbe9;transform:scaleX(1.2000);-webkit-text-stroke:0.18px #d6dbe9;">:</span>
<span class="t" style="left:983.28px;top:289.20px;font-size:15.6px;line-height:19.6px;color:#c678dd;transform:scaleX(1.0459);-webkit-text-stroke:0.18px #c678dd;">set to</span>
<span class="t" style="left:1029.00px;top:289.20px;font-size:15.6px;line-height:19.6px;color:#e5c07b;transform:scaleX(0.9995);-webkit-text-stroke:0.18px #e5c07b;">clamp(FailVariable-ToNumber("1"+StrRepeat("0",ToNumber(SubStr(LastPressedKey(),3,1)))),0,9999999999999999999)</span>
<span class="t" style="left:710.50px;top:311.70px;font-size:15.6px;line-height:19.6px;color:#8d919a;transform:scaleX(1.0584);-webkit-text-stroke:0.18px #8d919a;">Add action</span>
<span class="t" style="left:58.95px;top:387.70px;font-size:15.6px;line-height:19.6px;color:#d2d2d5;transform:scaleX(1.0084);-webkit-text-stroke:0.18px #d2d2d5;">Touch or</span>
<span class="t" style="left:125.38px;top:387.70px;font-size:15.6px;line-height:19.6px;color:#98c379;transform:scaleX(1.0444);-webkit-text-stroke:0.18px #98c379;">"Left"</span>
<span class="t" style="left:169.45px;top:387.70px;font-size:15.6px;line-height:19.6px;color:#d2d2d5;transform:scaleX(1.0484);-webkit-text-stroke:0.18px #d2d2d5;">mouse button is down</span>
<span class="t" style="left:58.95px;top:411.70px;font-size:15.6px;line-height:19.6px;color:#d2d2d5;transform:scaleX(1.0084);-webkit-text-stroke:0.18px #d2d2d5;">Touch or</span>
<span class="t" style="left:125.38px;top:411.70px;font-size:15.6px;line-height:19.6px;color:#98c379;transform:scaleX(1.0387);-webkit-text-stroke:0.18px #98c379;">"Right"</span>
<span class="t" style="left:180.15px;top:411.70px;font-size:15.6px;line-height:19.6px;color:#d2d2d5;transform:scaleX(1.0504);-webkit-text-stroke:0.18px #d2d2d5;">mouse button is down</span>
<span class="t" style="left:60.01px;top:435.70px;font-size:15.6px;line-height:19.6px;color:#98c379;transform:scaleX(0.9798);-webkit-text-stroke:0.18px #98c379;">"Num"+SubStr(LastPressedKey(),3,1)</span>
<span class="t" style="left:319.80px;top:435.70px;font-size:15.6px;line-height:19.6px;color:#d2d2d5;transform:scaleX(0.9974);-webkit-text-stroke:0.18px #d2d2d5;">key is pressed</span>
<span class="t" style="left:39.70px;top:459.70px;font-size:15.6px;line-height:19.6px;color:#8d919a;transform:scaleX(1.0727);-webkit-text-stroke:0.18px #8d919a;">Add condition</span>
<span class="t" style="left:729.24px;top:387.20px;font-size:15.6px;line-height:19.6px;color:#d6dbe9;transform:scaleX(1.0163);-webkit-text-stroke:0.18px #d6dbe9;">Change the variable</span>
<span class="t" style="left:893.26px;top:387.20px;font-size:15.6px;line-height:19.6px;color:#56b6c2;transform:scaleX(0.9943);-webkit-text-stroke:0.18px #56b6c2;">FailVariable</span>
<span class="t" style="left:973.70px;top:387.20px;font-size:15.6px;line-height:19.6px;color:#d6dbe9;transform:scaleX(1.2000);-webkit-text-stroke:0.18px #d6dbe9;">:</span>
<span class="t" style="left:983.28px;top:387.20px;font-size:15.6px;line-height:19.6px;color:#c678dd;transform:scaleX(1.0459);-webkit-text-stroke:0.18px #c678dd;">set to</span>
<span class="t" style="left:1029.00px;top:387.20px;font-size:15.6px;line-height:19.6px;color:#e5c07b;transform:scaleX(0.9998);-webkit-text-stroke:0.18px #e5c07b;">clamp(FailVariable-ToNumber("1"+StrRepeat("0",ToNumber(SubStr(LastPressedKey(),3,1))*2)),0,9999999999999999999)</span>
<span class="t" style="left:710.50px;top:409.70px;font-size:15.6px;line-height:19.6px;color:#8d919a;transform:scaleX(1.0584);-webkit-text-stroke:0.18px #8d919a;">Add action</span>
<span class="t" style="left:58.95px;top:485.70px;font-size:15.6px;line-height:19.6px;color:#d2d2d5;transform:scaleX(1.0084);-webkit-text-stroke:0.18px #d2d2d5;">Touch or</span>
<span class="t" style="left:125.38px;top:485.70px;font-size:15.6px;line-height:19.6px;color:#98c379;transform:scaleX(1.0444);-webkit-text-stroke:0.18px #98c379;">"Left"</span>
<span class="t" style="left:169.45px;top:485.70px;font-size:15.6px;line-height:19.6px;color:#d2d2d5;transform:scaleX(1.0484);-webkit-text-stroke:0.18px #d2d2d5;">mouse button is down</span>
<span class="t" style="left:77.25px;top:509.70px;font-size:15.6px;line-height:19.6px;color:#d2d2d5;transform:scaleX(1.0084);-webkit-text-stroke:0.18px #d2d2d5;">Touch or</span>
<span class="t" style="left:143.68px;top:509.70px;font-size:15.6px;line-height:19.6px;color:#98c379;transform:scaleX(1.0387);-webkit-text-stroke:0.18px #98c379;">"Right"</span>
<span class="t" style="left:198.45px;top:509.70px;font-size:15.6px;line-height:19.6px;color:#d2d2d5;transform:scaleX(1.0504);-webkit-text-stroke:0.18px #d2d2d5;">mouse button is down</span>
<span class="t" style="left:60.01px;top:533.70px;font-size:15.6px;line-height:19.6px;color:#98c379;transform:scaleX(0.9798);-webkit-text-stroke:0.18px #98c379;">"Num"+SubStr(LastPressedKey(),3,1)</span>
<span class="t" style="left:319.80px;top:533.70px;font-size:15.6px;line-height:19.6px;color:#d2d2d5;transform:scaleX(0.9974);-webkit-text-stroke:0.18px #d2d2d5;">key is pressed</span>
<span class="t" style="left:39.70px;top:557.70px;font-size:15.6px;line-height:19.6px;color:#8d919a;transform:scaleX(1.0727);-webkit-text-stroke:0.18px #8d919a;">Add condition</span>
<span class="t" style="left:729.24px;top:485.20px;font-size:15.6px;line-height:19.6px;color:#d6dbe9;transform:scaleX(1.0163);-webkit-text-stroke:0.18px #d6dbe9;">Change the variable</span>
<span class="t" style="left:893.26px;top:485.20px;font-size:15.6px;line-height:19.6px;color:#56b6c2;transform:scaleX(0.9943);-webkit-text-stroke:0.18px #56b6c2;">FailVariable</span>
<span class="t" style="left:973.70px;top:485.20px;font-size:15.6px;line-height:19.6px;color:#d6dbe9;transform:scaleX(1.2000);-webkit-text-stroke:0.18px #d6dbe9;">:</span>
<span class="t" style="left:983.28px;top:485.20px;font-size:15.6px;line-height:19.6px;color:#c678dd;transform:scaleX(1.0459);-webkit-text-stroke:0.18px #c678dd;">set to</span>
<span class="t" style="left:1029.00px;top:485.20px;font-size:15.6px;line-height:19.6px;color:#e5c07b;transform:scaleX(0.9995);-webkit-text-stroke:0.18px #e5c07b;">clamp(FailVariable+ToNumber("1"+StrRepeat("0",ToNumber(SubStr(LastPressedKey(),3,1)))),0,9999999999999999999)</span>
<span class="t" style="left:710.50px;top:507.70px;font-size:15.6px;line-height:19.6px;color:#8d919a;transform:scaleX(1.0584);-webkit-text-stroke:0.18px #8d919a;">Add action</span>
<span class="t" style="left:58.95px;top:583.70px;font-size:15.6px;line-height:19.6px;color:#d2d2d5;transform:scaleX(1.0084);-webkit-text-stroke:0.18px #d2d2d5;">Touch or</span>
<span class="t" style="left:125.38px;top:583.70px;font-size:15.6px;line-height:19.6px;color:#98c379;transform:scaleX(1.0387);-webkit-text-stroke:0.18px #98c379;">"Right"</span>
<span class="t" style="left:180.15px;top:583.70px;font-size:15.6px;line-height:19.6px;color:#d2d2d5;transform:scaleX(1.0504);-webkit-text-stroke:0.18px #d2d2d5;">mouse button is down</span>
<span class="t" style="left:77.25px;top:607.70px;font-size:15.6px;line-height:19.6px;color:#d2d2d5;transform:scaleX(1.0084);-webkit-text-stroke:0.18px #d2d2d5;">Touch or</span>
<span class="t" style="left:143.68px;top:607.70px;font-size:15.6px;line-height:19.6px;color:#98c379;transform:scaleX(1.0444);-webkit-text-stroke:0.18px #98c379;">"Left"</span>
<span class="t" style="left:187.75px;top:607.70px;font-size:15.6px;line-height:19.6px;color:#d2d2d5;transform:scaleX(1.0484);-webkit-text-stroke:0.18px #d2d2d5;">mouse button is down</span>
<span class="t" style="left:60.01px;top:631.70px;font-size:15.6px;line-height:19.6px;color:#98c379;transform:scaleX(0.9798);-webkit-text-stroke:0.18px #98c379;">"Num"+SubStr(LastPressedKey(),3,1)</span>
<span class="t" style="left:319.80px;top:631.70px;font-size:15.6px;line-height:19.6px;color:#d2d2d5;transform:scaleX(0.9974);-webkit-text-stroke:0.18px #d2d2d5;">key is pressed</span>
<span class="t" style="left:39.70px;top:655.70px;font-size:15.6px;line-height:19.6px;color:#8d919a;transform:scaleX(1.0727);-webkit-text-stroke:0.18px #8d919a;">Add condition</span>
<span class="t" style="left:729.24px;top:583.20px;font-size:15.6px;line-height:19.6px;color:#d6dbe9;transform:scaleX(1.0163);-webkit-text-stroke:0.18px #d6dbe9;">Change the variable</span>
<span class="t" style="left:893.26px;top:583.20px;font-size:15.6px;line-height:19.6px;color:#56b6c2;transform:scaleX(0.9943);-webkit-text-stroke:0.18px #56b6c2;">FailVariable</span>
<span class="t" style="left:973.70px;top:583.20px;font-size:15.6px;line-height:19.6px;color:#d6dbe9;transform:scaleX(1.2000);-webkit-text-stroke:0.18px #d6dbe9;">:</span>
<span class="t" style="left:983.28px;top:583.20px;font-size:15.6px;line-height:19.6px;color:#c678dd;transform:scaleX(1.0459);-webkit-text-stroke:0.18px #c678dd;">set to</span>
<span class="t" style="left:1029.00px;top:583.20px;font-size:15.6px;line-height:19.6px;color:#e5c07b;transform:scaleX(1.0007);-webkit-text-stroke:0.18px #e5c07b;">clamp(FailVariable+ToNumber("1"+StrRepeat("0",ToNumber(SubStr(LastPressedKey(),3,1))*2)),0,9999999999999999999)</span>
<span class="t" style="left:710.50px;top:605.70px;font-size:15.6px;line-height:19.6px;color:#8d919a;transform:scaleX(1.0584);-webkit-text-stroke:0.18px #8d919a;">Add action</span>
<span class="t" style="left:39.70px;top:680.70px;font-size:15.6px;line-height:19.6px;color:#8d919a;transform:scaleX(1.0727);-webkit-text-stroke:0.18px #8d919a;">Add condition</span>
<span class="t" style="left:729.23px;top:680.70px;font-size:15.6px;line-height:19.6px;color:#d6dbe9;transform:scaleX(1.0320);-webkit-text-stroke:0.18px #d6dbe9;">Change the text of</span>
<span class="t" style="left:883.96px;top:680.70px;font-size:15.6px;line-height:19.6px;color:#c678dd;transform:scaleX(1.0361);font-weight:700;-webkit-text-stroke:0.18px #c678dd;">BMText3</span>
<span class="t" style="left:951.10px;top:680.70px;font-size:15.6px;line-height:19.6px;color:#d6dbe9;transform:scaleX(1.2000);-webkit-text-stroke:0.18px #d6dbe9;">:</span>
<span class="t" style="left:960.28px;top:680.70px;font-size:15.6px;line-height:19.6px;color:#c678dd;transform:scaleX(1.0459);-webkit-text-stroke:0.18px #c678dd;">set to</span>
<span class="t" style="left:1007.00px;top:680.70px;font-size:15.6px;line-height:19.6px;color:#98c379;transform:scaleX(1.0076);-webkit-text-stroke:0.18px #98c379;">"NOT Formated "+FailVariable+" Formated "+SubStr(FailVariable,0,1+mod(StrLength(FailVariable)-1,3))+"</span>
<span class="t" style="left:712.00px;top:701.70px;font-size:15.6px;line-height:19.6px;color:#98c379;transform:scaleX(1.0051);-webkit-text-stroke:0.18px #98c379;">"+StrRepeat(Format[round((StrLength(FailVariable)-2)/3)-1],StrLength(SubStr(FailVariable,3,1)))+" "+" Formated Decimal</span>
<span class="t" style="left:712.01px;top:722.70px;font-size:15.6px;line-height:19.6px;color:#98c379;transform:scaleX(0.9867);-webkit-text-stroke:0.18px #98c379;">"+SubStr(FailVariable,0,1+mod(StrLength(FailVariable)-1,3))+StrRepeat("."+SubStr(FailVariable,3,1),StrLength(SubStr(FailVariable,3,1)))+"</span>
<span class="t" style="left:712.00px;top:743.70px;font-size:15.6px;line-height:19.6px;color:#98c379;transform:scaleX(0.9955);-webkit-text-stroke:0.18px #98c379;">"+StrRepeat(Format[round((StrLength(FailVariable)-2)/3)-1],StrLength(SubStr(FailVariable,3,1)))</span>
<span class="t" style="left:710.50px;top:766.70px;font-size:15.6px;line-height:19.6px;color:#8d919a;transform:scaleX(1.0584);-webkit-text-stroke:0.18px #8d919a;">Add action</span>
<span class="t" style="left:29.50px;top:797.20px;font-size:15.6px;line-height:19.6px;color:#8d919a;transform:scaleX(1.0216);-webkit-text-stroke:0.18px #8d919a;">Add a new event</span>
<span class="t" style="left:1873.00px;top:797.20px;font-size:15.6px;line-height:19.6px;color:#8d919a;transform:scaleX(0.9620);-webkit-text-stroke:0.18px #8d919a;">Add...</span>
<span class="t" style="left:67.00px;top:1057.00px;font-size:12px;line-height:16px;color:#ffffff;transform:scaleX(0.9271);">m Ys - Ys Ys Zs (Dwelli...</span>
<span class="t" style="left:227.28px;top:1057.00px;font-size:12px;line-height:16px;color:#ffffff;transform:scaleX(1.0161);">Formatting Numbers ...</span>
<span class="t" style="left:388.81px;top:1057.00px;font-size:12px;line-height:16px;color:#ffffff;transform:scaleX(0.9714);">GDevelop 5 - E:\Progr...</span>
<span class="t" style="left:1881.23px;top:1057.00px;font-size:12px;line-height:16px;color:#ffffff;transform:scaleX(0.9333);">04:08</span>
<span class="t" style="left:44.15px;top:340.40px;font-size:12.6px;line-height:16.6px;color:#2b4c7e;transform:scaleX(0.9882);font-weight:700;">A</span>
<span class="t" style="left:714.60px;top:293.10px;font-size:9px;line-height:13px;color:#eaf2ff;transform:scaleX(0.8286);font-weight:700;font-family:'Liberation Serif',serif;">Var</span>
<span class="t" style="left:44.15px;top:438.40px;font-size:12.6px;line-height:16.6px;color:#2b4c7e;transform:scaleX(0.9882);font-weight:700;">A</span>
<span class="t" style="left:714.60px;top:391.10px;font-size:9px;line-height:13px;color:#eaf2ff;transform:scaleX(0.8286);font-weight:700;font-family:'Liberation Serif',serif;">Var</span>
<span class="t" style="left:44.15px;top:536.40px;font-size:12.6px;line-height:16.6px;color:#2b4c7e;transform:scaleX(0.9882);font-weight:700;">A</span>
<span class="t" style="left:714.60px;top:489.10px;font-size:9px;line-height:13px;color:#eaf2ff;transform:scaleX(0.8286);font-weight:700;font-family:'Liberation Serif',serif;">Var</span>
<span class="t" style="left:44.15px;top:634.40px;font-size:12.6px;line-height:16.6px;color:#2b4c7e;transform:scaleX(0.9882);font-weight:700;">A</span>
<span class="t" style="left:714.60px;top:587.10px;font-size:9px;line-height:13px;color:#eaf2ff;transform:scaleX(0.8286);font-weight:700;font-family:'Liberation Serif',serif;">Var</span>
<span class="t" style="left:712.35px;top:682.70px;font-size:14px;line-height:18px;color:#9b9ea5;transform:scaleX(0.9091);font-family:'Liberation Serif',serif;font-style:italic;">txt</span>
<span class="t" style="left:867.76px;top:683.75px;font-size:10.5px;line-height:14.5px;color:#2b3d9a;transform:scaleX(0.8744);font-weight:700;">Bf</span>
<span class="t" style="left:712.35px;top:244.30px;font-size:14px;line-height:18px;color:#9b9ea5;transform:scaleX(0.9091);opacity:0.6;font-family:'Liberation Serif',serif;font-style:italic;">txt</span>
<span class="t" style="left:867.76px;top:245.35px;font-size:10.5px;line-height:14.5px;color:#2b3d9a;transform:scaleX(0.8744);font-weight:700;opacity:0.6;">Bf</span>
<div style="left:39.8px;top:139px;width:104.2px;height:2px;background:#a6a6a6;"></div>
<div style="left:39.8px;top:179px;width:421.79999999999995px;height:2px;background:#a6a6a6;"></div>
<div style="left:730px;top:251px;width:136px;height:1px;background:rgba(200,203,210,.85);"></div>
<div style="left:882px;top:251px;width:321px;height:1px;background:rgba(200,203,210,.85);"></div>
</div>
</body></html>
